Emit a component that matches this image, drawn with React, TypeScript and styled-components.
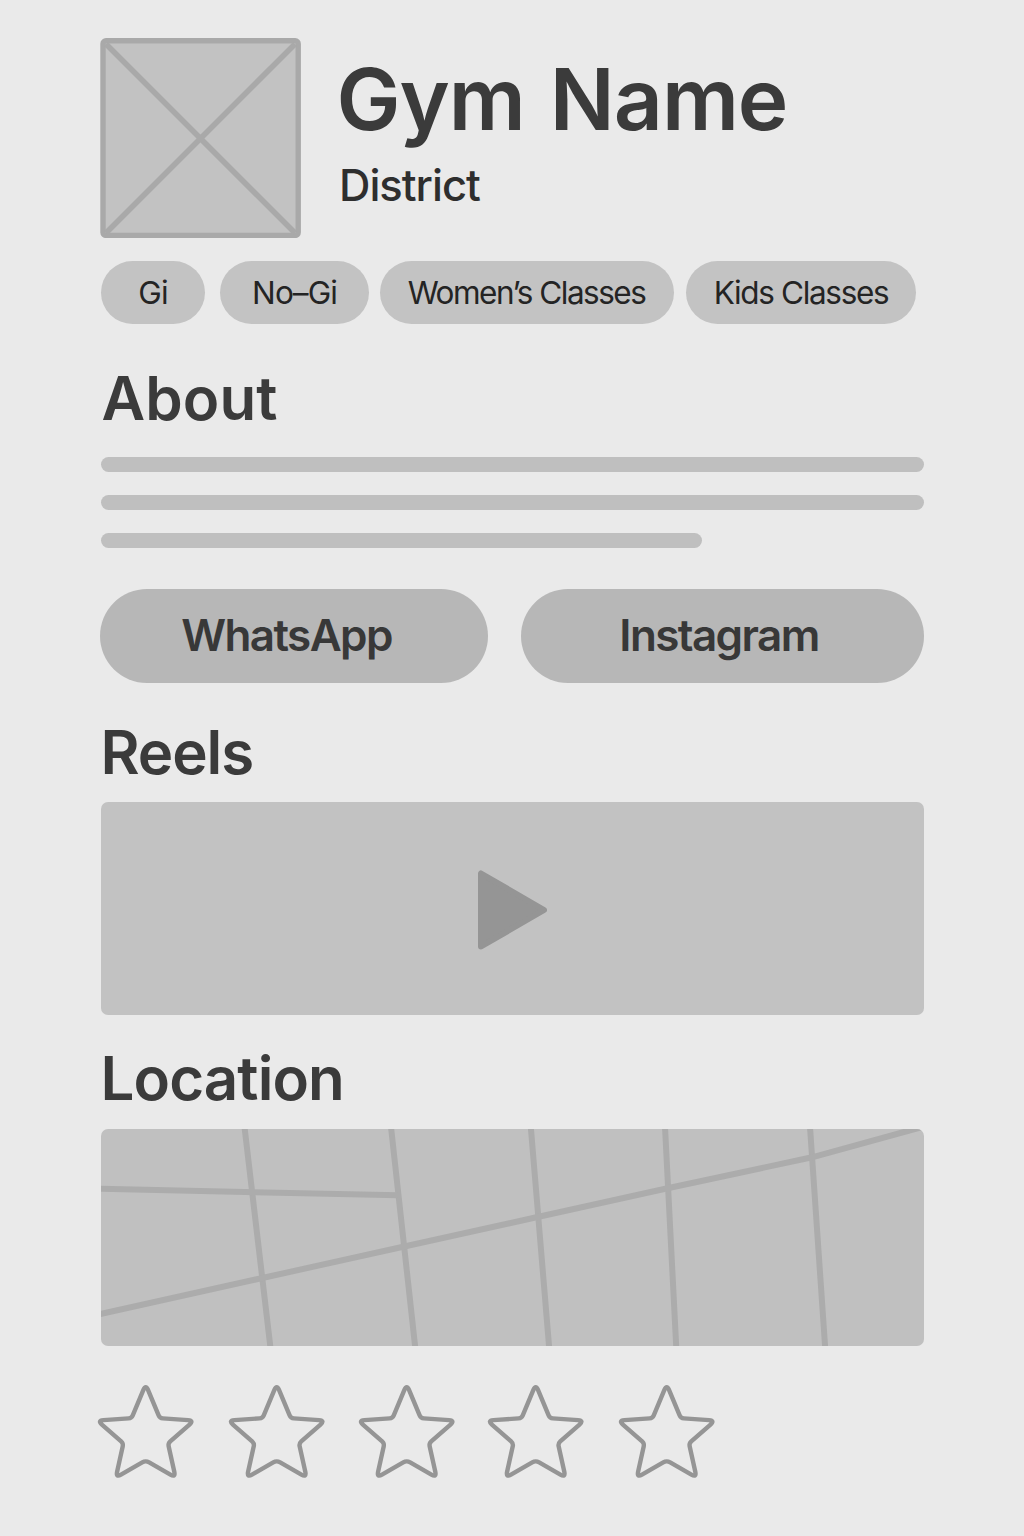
import React from "react";
import styled, { createGlobalStyle } from "styled-components";

const GlobalStyle = createGlobalStyle`
  *, *::before, *::after { box-sizing: border-box; }
  body {
    margin: 0;
    background: #eaeaea;
    color: #3b3b3b;
    font-family: Inter, "Liberation Sans", sans-serif;
  }
`;

const Page = styled.main`
  width: 1024px;
  height: 1536px;
  padding: 38px 100px 0 100px;
  display: flex;
  flex-direction: column;
  overflow: hidden;
`;

const Header = styled.header`
  display: flex;
  gap: 37px;
  height: 200px;
`;

const Avatar = styled.svg`
  display: block;
  flex: none;
  width: 201px;
  height: 200px;
`;

const Identity = styled.div`
  display: flex;
  flex-direction: column;
  padding-top: 11px;
`;

const GymName = styled.h1`
  margin: 0 0 0 -1.5px;
  font-size: 85.5px;
  font-weight: 600;
  line-height: 100px;
  letter-spacing: -1px;
  word-spacing: 4.5px;
  white-space: nowrap;
`;

const District = styled.p`
  margin: 6px 0 0 1px;
  font-size: 43.5px;
  font-weight: 500;
  line-height: 60px;
  letter-spacing: -1px;
  color: #2e2e2e;
  white-space: nowrap;
`;

const Chips = styled.div`
  display: flex;
  margin: 23px 0 0 1px;
  height: 63px;
`;

const Chip = styled.span<{ $width: number; $gap: number; $spacing: number }>`
  flex: none;
  display: flex;
  align-items: center;
  justify-content: center;
  width: ${(p) => p.$width}px;
  margin-right: ${(p) => p.$gap}px;
  height: 63px;
  border-radius: 32px;
  background: #c3c3c3;
  color: #242424;
  font-size: 31.5px;
  font-weight: 400;
  letter-spacing: ${(p) => p.$spacing}px;
  white-space: nowrap;
`;

const Heading = styled.h2<{ $top: number; $spacing: number; $left?: number }>`
  margin: ${(p) => p.$top}px 0 0 ${(p) => p.$left ?? 0.5}px;
  height: 70px;
  font-size: 60px;
  font-weight: 600;
  line-height: 70px;
  letter-spacing: ${(p) => p.$spacing}px;
  white-space: nowrap;
`;

const Paragraph = styled.div`
  display: flex;
  flex-direction: column;
  gap: 23px;
  margin: 24px 0 0 1px;
`;

const Line = styled.div<{ $width: number }>`
  width: ${(p) => p.$width}px;
  height: 15px;
  border-radius: 8px;
  background: #bfbfbf;
`;

const Actions = styled.div`
  display: flex;
  gap: 33px;
  margin-top: 41px;
`;

const ActionButton = styled.button<{ $width: number; $shift: number }>`
  width: ${(p) => p.$width}px;
  height: 94px;
  padding: 0 ${(p) => p.$shift}px 2px 0;
  border: 0;
  border-radius: 47px;
  background: #b7b7b7;
  color: #383838;
  font: 600 44px Inter, "Liberation Sans", sans-serif;
  letter-spacing: -1.6px;
  white-space: nowrap;
`;

const Panel = styled.div<{ $top: number; $height: number; $tone: string }>`
  margin: ${(p) => p.$top}px 0 0 0.5px;
  width: 823.5px;
  height: ${(p) => p.$height}px;
  border-radius: 7px;
  overflow: hidden;
  background: ${(p) => p.$tone};
  display: flex;
  align-items: center;
  justify-content: center;
  flex: none;
`;

const PlayIcon = styled.svg`
  display: block;
  width: 70px;
  height: 82px;
  margin-top: 3px;
`;

const Roads = styled.svg`
  display: block;
  flex: none;
  width: 824px;
  height: 217px;
  fill: none;
  stroke: #acacac;
  stroke-width: 6;
`;

const Rating = styled.div`
  display: flex;
  margin: 37px 0 0 -3px;
`;

const StarIcon = styled.svg<{ $gap: number }>`
  flex: none;
  display: block;
  width: 98px;
  height: 96px;
  margin-right: ${(p) => p.$gap}px;
  fill: none;
  stroke: #959595;
  stroke-width: 4.4;
`;

const chips = [
  { label: "Gi", width: 104, gap: 15, spacing: -0.9 },
  { label: "No–Gi", width: 149, gap: 10.5, spacing: -0.95 },
  { label: "Women’s Classes", width: 294, gap: 12.5, spacing: -1.5 },
  { label: "Kids Classes", width: 230, gap: 0, spacing: -1.35 },
];

const starGaps = [33, 32, 31, 33, 0];

type Corner = [x: number, y: number, radius: number];

const starCorners: Corner[] = [
  [48.7, 1.4, 6],
  [62.8, 35.2, 3],
  [97, 37.6, 6],
  [71, 60.4, 3],
  [78.6, 94.6, 6],
  [48.7, 77.4, 4],
  [18.8, 94.6, 6],
  [26.4, 60.4, 3],
  [0.4, 37.6, 6],
  [34.6, 35.2, 3],
];

// Builds a closed outline whose corners are softened by a quadratic curve.
function roundedPath(corners: Corner[]): string {
  const towards = (a: Corner, b: Corner, d: number) => {
    const t = d / Math.hypot(b[0] - a[0], b[1] - a[1]);
    return `${(a[0] + (b[0] - a[0]) * t).toFixed(2)} ${(a[1] + (b[1] - a[1]) * t).toFixed(2)}`;
  };
  const n = corners.length;
  return (
    corners
      .map((c, i) => {
        const prev = corners[(i + n - 1) % n];
        const next = corners[(i + 1) % n];
        return `${i ? "L" : "M"}${towards(c, prev, c[2])} Q${c[0]} ${c[1]} ${towards(c, next, c[2])}`;
      })
      .join(" ") + "Z"
  );
}

const starPath = roundedPath(starCorners);

export default function App() {
  return (
    <>
      <GlobalStyle />
      <Page>
        <Header>
          <Avatar viewBox="0 0 201 200">
            <rect x="3" y="2.8" width="195.2" height="194.6" rx="3" fill="#c2c2c2" stroke="#a9a9a9" strokeWidth="5.4" />
            <path d="M6 6L195 195M195 6L6 195" stroke="#a9a9a9" strokeWidth="5.6" />
          </Avatar>
          <Identity>
            <GymName>Gym Name</GymName>
            <District>District</District>
          </Identity>
        </Header>

        <Chips>
          {chips.map((c) => (
            <Chip key={c.label} $width={c.width} $gap={c.gap} $spacing={c.spacing}>
              {c.label}
            </Chip>
          ))}
        </Chips>

        <Heading $top={39} $spacing={0.1} $left={1.5}>About</Heading>
        <Paragraph>
          <Line $width={823} />
          <Line $width={823} />
          <Line $width={601} />
        </Paragraph>

        <Actions>
          <ActionButton $width={388} $shift={15}>WhatsApp</ActionButton>
          <ActionButton $width={403} $shift={7}>Instagram</ActionButton>
        </Actions>

        <Heading $top={34} $spacing={-1.1}>Reels</Heading>
        <Panel $top={15} $height={213} $tone="#c2c2c2">
          <PlayIcon viewBox="0 0 70 82">
            <path d="M4 4.5V77.5L67 41Z" fill="#959595" stroke="#959595" strokeWidth="6" strokeLinejoin="round" />
          </PlayIcon>
        </Panel>

        <Heading $top={28} $spacing={-0.9}>Location</Heading>
        <Panel $top={16} $height={217} $tone="#c0c0c0">
          <Roads viewBox="100 1129 824 217">
            <path d="M244.5 1127L270.5 1348M391 1127L415.3 1348M530.8 1127L549.2 1348M665 1127L676.3 1348M810 1127L825.2 1348" />
            <path d="M99 1188.8L398 1195.3" />
            <path d="M98 1314.5L262.3 1278L404.3 1246.5L538.7 1216.8L668.7 1188L812 1157.3L922 1127" />
          </Roads>
        </Panel>

        <Rating>
          {starGaps.map((gap, i) => (
            <StarIcon key={i} $gap={gap} viewBox="0 0 98 96">
              <path d={starPath} />
            </StarIcon>
          ))}
        </Rating>
      </Page>
    </>
  );
}
